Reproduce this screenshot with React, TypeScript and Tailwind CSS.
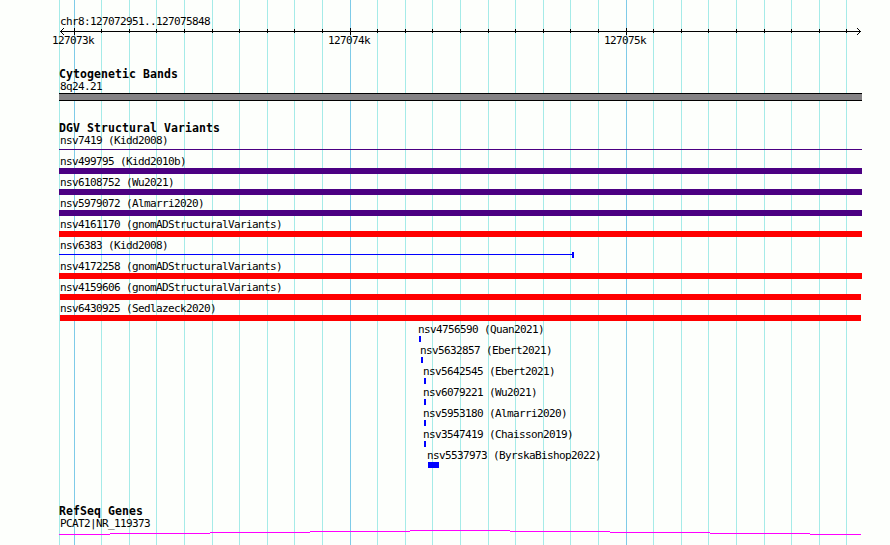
import { clsx } from 'clsx';

type Variant = {
  id: string;
  study: string;
  start: number;
  end: number;
  color: string;
  thin?: boolean;
  capped?: boolean;
};

const LEFT = 59;
const MAJOR = [74, 350, 626];
const MINOR = [
  101, 129, 156, 184, 212, 239, 267, 294, 322, 377, 405, 432, 460, 488,
  515, 543, 570, 598, 653, 681, 708, 736, 764, 791, 819, 846,
];

const variants: Variant[] = [
  { id: 'nsv7419', study: 'Kidd2008', start: 59, end: 862, color: 'bg-[#4b0082]', thin: true },
  { id: 'nsv499795', study: 'Kidd2010b', start: 59, end: 862, color: 'bg-[#4b0082]' },
  { id: 'nsv6108752', study: 'Wu2021', start: 59, end: 862, color: 'bg-[#4b0082]' },
  { id: 'nsv5979072', study: 'Almarri2020', start: 59, end: 862, color: 'bg-[#4b0082]' },
  { id: 'nsv4161170', study: 'gnomADStructuralVariants', start: 59, end: 862, color: 'bg-[#ff0000]' },
  { id: 'nsv6383', study: 'Kidd2008', start: 59, end: 574, color: 'bg-[#0000ff]', thin: true, capped: true },
  { id: 'nsv4172258', study: 'gnomADStructuralVariants', start: 59, end: 862, color: 'bg-[#ff0000]' },
  { id: 'nsv4159606', study: 'gnomADStructuralVariants', start: 60, end: 861, color: 'bg-[#ff0000]' },
  { id: 'nsv6430925', study: 'Sedlazeck2020', start: 60, end: 861, color: 'bg-[#ff0000]' },
  { id: 'nsv4756590', study: 'Quan2021', start: 419, end: 421, color: 'bg-[#0000ff]' },
  { id: 'nsv5632857', study: 'Ebert2021', start: 421, end: 423, color: 'bg-[#0000ff]' },
  { id: 'nsv5642545', study: 'Ebert2021', start: 424, end: 426, color: 'bg-[#0000ff]' },
  { id: 'nsv6079221', study: 'Wu2021', start: 424, end: 426, color: 'bg-[#0000ff]' },
  { id: 'nsv5953180', study: 'Almarri2020', start: 424, end: 426, color: 'bg-[#0000ff]' },
  { id: 'nsv3547419', study: 'Chaisson2019', start: 424, end: 426, color: 'bg-[#0000ff]' },
  { id: 'nsv5537973', study: 'ByrskaBishop2022', start: 428, end: 439, color: 'bg-[#0000ff]' },
];

function GridLines() {
  return (
    <svg className="absolute inset-0" width="890" height="545" shapeRendering="crispEdges">
      {[LEFT, ...MINOR].map((x) => (
        <rect key={x} x={x} y="0" width="1" height="545" fill="#a5ebe8" />
      ))}
      {MAJOR.map((x) => (
        <rect key={x} x={x} y="0" width="1" height="545" fill="#7ecbe8" />
      ))}
    </svg>
  );
}

function Ruler() {
  return (
    <svg className="block" width="890" height="7" shapeRendering="crispEdges">
      <rect x="60" y="3" width="801" height="1" />
      {MINOR.map((x) => (
        <rect key={x} x={x} y="1" width="1" height="4" />
      ))}
      {MAJOR.map((x) => (
        <rect key={x} x={x} y="0" width="1" height="7" />
      ))}
      {[1, 2, 3].map((d) => (
        <g key={d}>
          <rect x={60 + d} y={3 - d} width="1" height="1" />
          <rect x={60 + d} y={3 + d} width="1" height="1" />
          <rect x={860 - d} y={3 - d} width="1" height="1" />
          <rect x={860 - d} y={3 + d} width="1" height="1" />
        </g>
      ))}
    </svg>
  );
}

function TrackTitle({ children }: { children: string }) {
  return (
    <h2 className="h-[13px] pl-[59px] text-[11.5px] leading-[13px] font-bold tracking-[0.077px]">
      {children}
    </h2>
  );
}

function VariantRow({ variant }: { variant: Variant }) {
  const { id, study, start, end, color, thin, capped } = variant;
  const labelStart = start < 100 ? 60 : start - 1;

  return (
    <div className="h-[21px]">
      <div className="h-[13px]" style={{ paddingLeft: labelStart }}>
        {id} ({study})
      </div>
      <div className="flex h-1.5 items-start" style={{ marginLeft: start, width: end - start }}>
        <div className={clsx('flex-1', color, thin ? 'mt-0.5 h-px' : 'h-1.5')} />
        {capped && <div className={clsx('h-1.5 w-0.5', color)} />}
      </div>
    </div>
  );
}

export default function App() {
  return (
    <div className="relative h-[545px] w-[890px] overflow-hidden bg-[#fdfffc] font-['DejaVu_Sans_Mono',monospace] text-[11px] leading-[13px] tracking-[-0.622px] whitespace-nowrap text-black">
      <GridLines />
      <div className="relative flex flex-col pt-[15px]">
        {/* Position and scale */}
        <div className="h-[13px] pl-[60px]">chr8:127072951..127075848</div>
        <Ruler />
        <div className="flex h-[33px] pl-[52px] leading-[11px]">
          <span className="w-[276px]">127073k</span>
          <span className="w-[276px]">127074k</span>
          <span>127075k</span>
        </div>

        {/* Cytogenetic bands */}
        <TrackTitle>Cytogenetic Bands</TrackTitle>
        <div className="h-3 pl-[60px] leading-3">8q24.21</div>
        <div className="ml-[59px] h-2 w-[803px] border-y border-black bg-[#848284]" />

        {/* Structural variants */}
        <div className="pt-[21px]">
          <TrackTitle>DGV Structural Variants</TrackTitle>
          <div className="-mt-px">
            {variants.map((variant) => (
              <VariantRow key={variant.id} variant={variant} />
            ))}
          </div>
        </div>

        {/* Genes */}
        <div className="pt-[35px]">
          <TrackTitle>RefSeq Genes</TrackTitle>
          <div className="h-3 pl-[60px] leading-3">PCAT2|NR_119373</div>
          <svg className="block" width="890" height="15" shapeRendering="crispEdges">
            {[4, 3, 2, 1, 0, 1, 2, 3, 4].map((y, i) => {
              const x = i === 0 ? LEFT : 10 + i * 100;
              const end = Math.min(110 + i * 100, 861);
              return <rect key={i} x={x} y={y} width={end - x} height="1" fill="#ff00ff" />;
            })}
          </svg>
        </div>
      </div>
    </div>
  );
}
